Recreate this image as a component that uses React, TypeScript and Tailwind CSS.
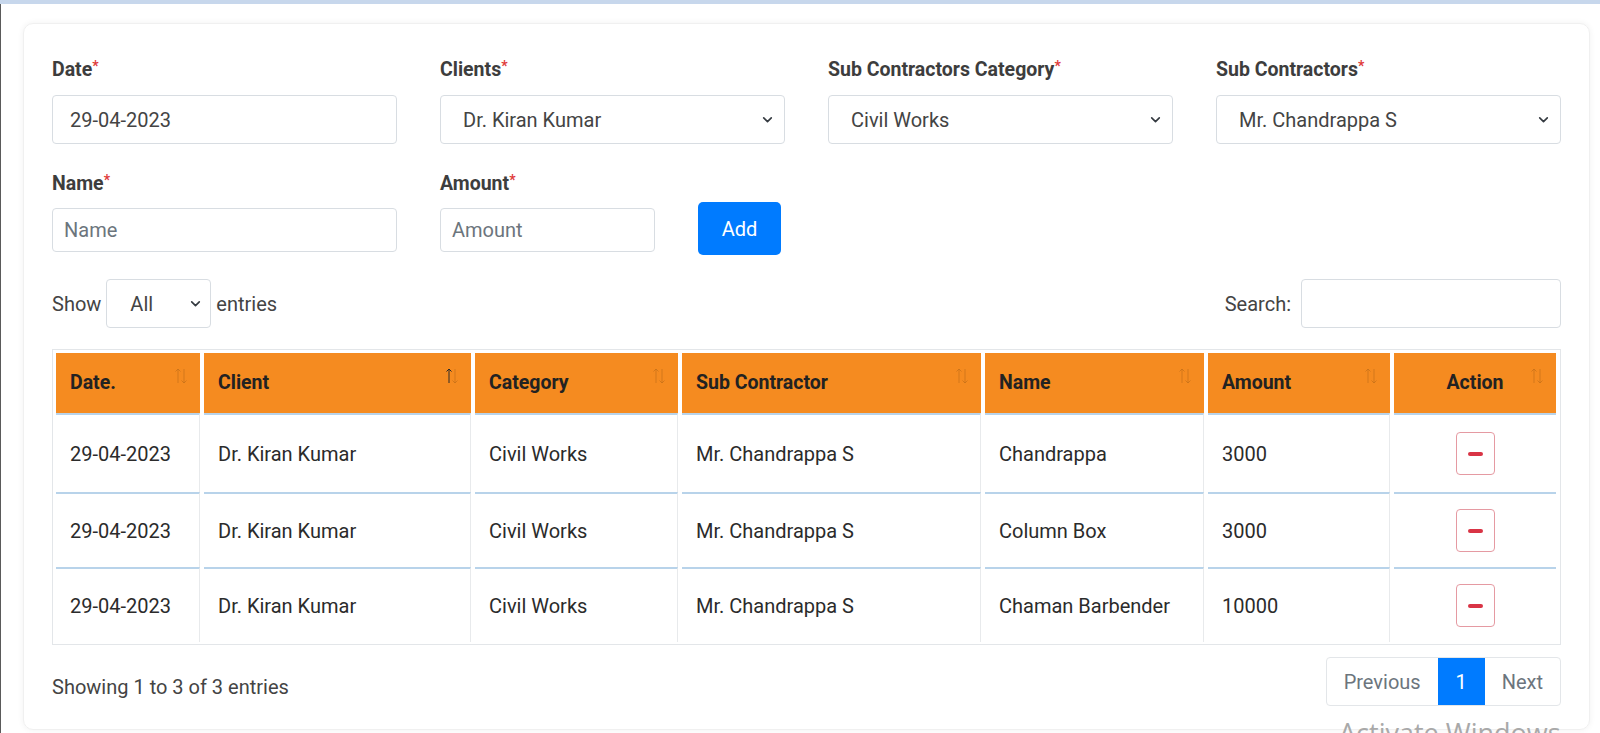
import React from "react";

const rows = [
  { date: "29-04-2023", client: "Dr. Kiran Kumar", category: "Civil Works", sub: "Mr. Chandrappa S", name: "Chandrappa", amount: "3000" },
  { date: "29-04-2023", client: "Dr. Kiran Kumar", category: "Civil Works", sub: "Mr. Chandrappa S", name: "Column Box", amount: "3000" },
  { date: "29-04-2023", client: "Dr. Kiran Kumar", category: "Civil Works", sub: "Mr. Chandrappa S", name: "Chaman Barbender", amount: "10000" },
];

const Chevron = () => (
  <svg width="13" height="13" viewBox="0 0 12 12">
    <path d="M2.5 4.5 6 8l3.5-3.5" fill="none" stroke="#343a40" strokeWidth="1.5" strokeLinecap="round" strokeLinejoin="round" />
  </svg>
);

const SortIcon = ({ active }: { active?: boolean }) => (
  <svg width="14" height="18" viewBox="0 0 14 18">
    <path d="M4 16V2M1.5 4.5 4 2l2.5 2.5" fill="none" stroke={active ? "#2a2a2a" : "#b86a16"} strokeOpacity={active ? 1 : 0.55} strokeWidth="1" />
    <path d="M10 2v14M7.5 13.5 10 16l2.5-2.5" fill="none" stroke="#b86a16" strokeOpacity="0.55" strokeWidth="1" />
  </svg>
);

const Label = ({ text }: { text: string }) => (
  <div className="text-[19.5px] font-bold text-[#3d3d3d] leading-[26px]">
    {text}
    <span className="text-[#e03a3a] text-[14px] align-top relative -top-[4px]">*</span>
  </div>
);

const Select = ({ value }: { value: string }) => (
  <div className="flex items-center justify-between h-[49px] border border-[#d8dde2] rounded-[4px] pl-[22px] pr-[10px] text-[20px] text-[#444]">
    <span>{value}</span>
    <Chevron />
  </div>
);

export default function App() {
  const headers = ["Date.", "Client", "Category", "Sub Contractor", "Name", "Amount", "Action"];
  const widths = ["w-[144px]", "w-[267px]", "w-[203px]", "w-[299px]", "w-[219px]", "w-[182px]", "w-[162px]"];

  return (
    <div className="relative w-[1600px] h-[733px] overflow-hidden bg-white" style={{ fontFamily: "Roboto, 'Liberation Sans', sans-serif" }}>
      <div className="h-[4px] bg-[#c7d7ec]" />
      <div className="flex h-[729px] border-l border-[#5a5a5a]">
        <div className="ml-[22px] mt-[19px] w-[1567px] h-[707px] rounded-[10px] border border-[#f0f0f0] shadow-[0_0_6px_rgba(0,0,0,0.06)] px-[28px] pt-[33px]">
          {/* row 1 */}
          <div className="flex gap-[43px]">
            <div className="w-[345px] flex flex-col gap-[12px]">
              <Label text="Date" />
              <div className="flex items-center h-[49px] border border-[#d8dde2] rounded-[4px] pl-[17px] text-[20px] text-[#444]">29-04-2023</div>
            </div>
            <div className="w-[345px] flex flex-col gap-[12px]">
              <Label text="Clients" />
              <Select value="Dr. Kiran Kumar" />
            </div>
            <div className="w-[345px] flex flex-col gap-[12px]">
              <Label text="Sub Contractors Category" />
              <Select value="Civil Works" />
            </div>
            <div className="w-[345px] flex flex-col gap-[12px]">
              <Label text="Sub Contractors" />
              <Select value="Mr. Chandrappa S" />
            </div>
          </div>

          {/* row 2 */}
          <div className="flex gap-[43px] mt-[27px]">
            <div className="w-[345px] flex flex-col gap-[11px]">
              <Label text="Name" />
              <div className="flex items-center h-[44px] border border-[#d8dde2] rounded-[4px] pl-[11px] text-[20px] text-[#6c757d]">Name</div>
            </div>
            <div className="w-[215px] flex flex-col gap-[11px]">
              <Label text="Amount" />
              <div className="flex items-center h-[44px] border border-[#d8dde2] rounded-[4px] pl-[11px] text-[20px] text-[#6c757d]">Amount</div>
            </div>
            <div className="pt-[31px]">
              <button className="w-[83px] h-[53px] rounded-[5px] bg-[#007bff] text-white text-[20px]">Add</button>
            </div>
          </div>

          {/* show / search */}
          <div className="flex items-center justify-between mt-[24px] text-[20px] text-[#444]">
            <div className="flex items-center gap-[5px]">
              <span>Show</span>
              <div className="flex items-center justify-between w-[105px] h-[49px] border border-[#d8dde2] rounded-[4px] pl-[23px] pr-[8px]">
                <span>All</span>
                <Chevron />
              </div>
              <span>entries</span>
            </div>
            <div className="flex items-center gap-[10px]">
              <span>Search:</span>
              <div className="w-[260px] h-[49px] border border-[#d8dde2] rounded-[4px]" />
            </div>
          </div>

          {/* table */}
          <div className="mt-[21px] border border-[#e3e6e9] pt-[3px] pb-[2px] pl-[3px]">
            <table className="border-separate border-spacing-x-[4px] border-spacing-y-0 -ml-[4px] text-[20px] text-[#222]">
              <thead>
                <tr>
                  {headers.map((h, i) => (
                    <th
                      key={h}
                      className={`relative h-[60px] bg-[#f58b20] text-[19.5px] font-bold px-[14px] ${widths[i]} ${h === "Action" ? "text-center" : "text-left"}`}
                    >
                      {h}
                      <span className="absolute right-[12px] top-[14px]">
                        <SortIcon active={h === "Client"} />
                      </span>
                    </th>
                  ))}
                </tr>
              </thead>
              <tbody>
                {rows.map((r, ri) => (
                  <tr key={ri} className={ri === 0 ? "h-[79px]" : "h-[75px]"}>
                    {[r.date, r.client, r.category, r.sub, r.name, r.amount].map((c, ci) => (
                      <td key={ci} className="border-t-2 border-t-[#b8d3ea] border-r border-r-[#e8eaec] px-[14px] text-[#2b2b2b]">
                        {c}
                      </td>
                    ))}
                    <td className="border-t-2 border-t-[#b8d3ea] text-center">
                      <div className="inline-flex items-center justify-center w-[39px] h-[43px] border border-[#e59aa2] rounded-[4px] align-middle">
                        <span className="block w-[15px] h-[4px] rounded-[2px] bg-[#d93445]" />
                      </div>
                    </td>
                  </tr>
                ))}
              </tbody>
            </table>
          </div>

          {/* footer */}
          <div className="flex items-center justify-between mt-[12px]">
            <span className="pt-[10px] text-[20px] text-[#444]">Showing 1 to 3 of 3 entries</span>
            <div className="flex h-[49px] border border-[#e3e6e9] rounded-[4px] text-[20px] text-[#6c757d]">
              <span className="flex items-center px-[17px]">Previous</span>
              <span className="flex items-center justify-center w-[47px] bg-[#007bff] text-white">1</span>
              <span className="flex items-center px-[17px]">Next</span>
            </div>
          </div>
        </div>
      </div>
      <div className="absolute left-[1339px] top-[713px] text-[27px] text-[#a9a9a9] whitespace-nowrap" style={{ fontFamily: "'Open Sans', sans-serif" }}>
        Activate Windows
      </div>
    </div>
  );
}
